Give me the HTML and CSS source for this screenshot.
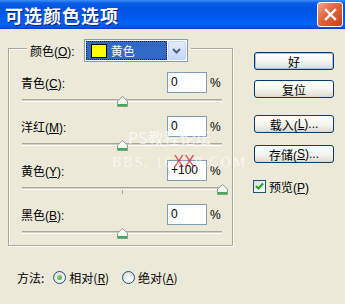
FILE: index.html
```html
<!DOCTYPE html>
<html lang="zh-CN">
<head>
    <meta charset="UTF-8">
    <title>可选颜色选项</title>
    <link rel="stylesheet" href="styles.css">
</head>
<body>
<div class="dialog">
    <div class="titlebar">
        <span class="title">可选颜色选项</span>
        <span class="close-btn">
            <svg width="13" height="13" viewBox="0 0 13 13"><path d="M2 2 L11 11 M11 2 L2 11" stroke="#fff" stroke-width="2.4" stroke-linecap="square"/></svg>
        </span>
    </div>

    <div class="content">
        <div class="left-col">
            <div class="group">
                <div class="legend">
                    <span>颜色(<u>O</u>):</span>
                    <div class="combo">
                        <div class="combo-value"><span class="swatch"></span>黄色</div>
                        <div class="combo-arrow">
                            <svg width="9" height="6" viewBox="0 0 9 6"><path d="M1 1 L4.5 4.5 L8 1" fill="none" stroke="#4d6185" stroke-width="2"/></svg>
                        </div>
                    </div>
                </div>

                <div class="row">
                    <div class="row-head">
                        <span class="row-label">青色(<u>C</u>):</span>
                        <span class="num-box">0</span>
                        <span class="pct">%</span>
                    </div>
                    <div class="slider">
                        <span class="tick"></span>
                        <span class="thumb" style="left: 50%"><svg width="11" height="11" viewBox="0 0 11 11"><path d="M5.5 0.5 L10.5 5 V10.5 H0.5 V5 Z" fill="#f6f6f1" stroke="#8b9ca3"/><rect x="1" y="8" width="9" height="2" fill="#3fae48"/></svg></span>
                    </div>
                </div>

                <div class="row">
                    <div class="row-head">
                        <span class="row-label">洋红(<u>M</u>):</span>
                        <span class="num-box">0</span>
                        <span class="pct">%</span>
                    </div>
                    <div class="slider">
                        <span class="tick"></span>
                        <span class="thumb" style="left: 50%"><svg width="11" height="11" viewBox="0 0 11 11"><path d="M5.5 0.5 L10.5 5 V10.5 H0.5 V5 Z" fill="#f6f6f1" stroke="#8b9ca3"/><rect x="1" y="8" width="9" height="2" fill="#3fae48"/></svg></span>
                    </div>
                </div>

                <div class="row">
                    <div class="row-head">
                        <span class="row-label">黄色(<u>Y</u>):</span>
                        <span class="num-box">+100</span>
                        <span class="pct">%</span>
                    </div>
                    <div class="slider">
                        <span class="tick"></span>
                        <span class="thumb" style="left: 100%"><svg width="11" height="11" viewBox="0 0 11 11"><path d="M5.5 0.5 L10.5 5 V10.5 H0.5 V5 Z" fill="#f6f6f1" stroke="#8b9ca3"/><rect x="1" y="8" width="9" height="2" fill="#3fae48"/></svg></span>
                    </div>
                </div>

                <div class="row">
                    <div class="row-head">
                        <span class="row-label">黑色(<u>B</u>):</span>
                        <span class="num-box">0</span>
                        <span class="pct">%</span>
                    </div>
                    <div class="slider">
                        <span class="tick"></span>
                        <span class="thumb" style="left: 50%"><svg width="11" height="11" viewBox="0 0 11 11"><path d="M5.5 0.5 L10.5 5 V10.5 H0.5 V5 Z" fill="#f6f6f1" stroke="#8b9ca3"/><rect x="1" y="8" width="9" height="2" fill="#3fae48"/></svg></span>
                    </div>
                </div>
            </div>

            <div class="method">
                <span class="method-label">方法:</span>
                <span class="radio checked"></span>
                <span class="radio-text">相对(<u>R</u>)</span>
                <span class="radio"></span>
                <span class="radio-text">绝对(<u>A</u>)</span>
            </div>
        </div>

        <div class="right-col">
            <div class="btn btn-default">好</div>
            <div class="btn btn-reset">复位</div>
            <div class="btn btn-load">载入(<u>L</u>)...</div>
            <div class="btn btn-save">存储(<u>S</u>)...</div>
            <div class="preview">
                <span class="check">
                    <svg width="9" height="9" viewBox="0 0 9 9"><path d="M1 4 L3.5 6.5 L8 1.5" fill="none" stroke="#21a121" stroke-width="2"/></svg>
                </span>
                <span>预览(<u>P</u>)</span>
            </div>
        </div>
    </div>

    <div class="watermark">
        <div class="wm-top">PS教程论坛</div>
        <div class="wm-bottom">BBS. 16<span class="wm-red">XX</span>8.COM</div>
    </div>
</div>
</body>
</html>
```

FILE: styles.css
```css
body {
    margin: 0;
    background: #ece9d8;
    font-family: "Liberation Sans", "Noto Sans CJK SC", sans-serif;
    font-size: 12px;
    color: #000;
}
.dialog {
    position: relative;
    width: 345px;
    height: 304px;
    overflow: hidden;
}
.titlebar {
    box-sizing: border-box;
    height: 29px;
    display: flex;
    align-items: center;
    justify-content: space-between;
    padding: 0 2px 0 5px;
    background: linear-gradient(to bottom, #3d8ff6 0, #0a5fe6 3px, #0054e3 8px, #0058eb 50%, #0062f5 80%, #0058e8 92%, #0040c4 100%);
}
.title {
    color: #fff;
    font-family: "Noto Sans CJK SC", sans-serif;
    font-weight: bold;
    font-size: 18px;
    letter-spacing: 1px;
    text-shadow: 1px 1px 0 #0a1e7a;
}
.close-btn {
    box-sizing: border-box;
    width: 26px;
    height: 25px;
    border: 1px solid #fff;
    border-radius: 3px;
    background: linear-gradient(135deg, #f2a88a 0, #e26a40 40%, #c8401a 100%);
    display: flex;
    align-items: center;
    justify-content: center;
}

.content {
    display: flex;
    padding: 19px 0 0 8px;
}
.left-col {
    width: 225px;
}
.group {
    box-sizing: border-box;
    width: 225px;
    border: 1px solid #aca899;
    box-shadow: inset 1px 1px 0 #fff, 1px 1px 0 #fff;
    padding: 0 10px 6px 12px;
}
.legend {
    display: flex;
    align-items: center;
    gap: 9px;
    width: max-content;
    margin: -10px 0 10px 6px;
    padding: 0 3px;
    background: #ece9d8;
}
.combo {
    box-sizing: border-box;
    display: flex;
    gap: 1px;
    width: 104px;
    height: 23px;
    padding: 1px;
    border: 1px solid #7f9db9;
    background: #fff;
}
.combo-value {
    flex: 1;
    display: flex;
    align-items: center;
    gap: 4px;
    padding-left: 4px;
    border: 1px dotted #222;
    background: #316ac5;
    color: #fff;
    font-family: "Noto Sans CJK SC", sans-serif;
}
.swatch {
    box-sizing: border-box;
    width: 16px;
    height: 14px;
    border: 1px solid #000;
    background: #ffff00;
}
.combo-arrow {
    box-sizing: border-box;
    width: 18px;
    display: flex;
    align-items: center;
    justify-content: center;
    border: 1px solid #c3d3fd;
    border-radius: 2px;
    background: linear-gradient(to bottom, #e6eefe, #c4d6fc);
}

.row + .row {
    margin-top: 9px;
}
.row-head {
    display: flex;
    align-items: center;
    height: 21px;
}
.row-label {
    flex: 1;
}
.num-box {
    box-sizing: border-box;
    width: 40px;
    height: 21px;
    border: 1px solid #7f9db9;
    background: #fff;
    padding-left: 3px;
    line-height: 19px;
}
.pct {
    width: 12px;
    margin-left: 3px;
}
.slider {
    position: relative;
    width: 200px;
    height: 14px;
    margin-left: 1px;
}
.slider::before {
    content: "";
    position: absolute;
    left: 0;
    right: 0;
    top: 6px;
    height: 1px;
    background: #d3d0c4;
    border-top: 1px solid #aca899;
    border-bottom: 1px solid #fff;
}
.tick {
    position: absolute;
    left: 50%;
    top: 9px;
    width: 1px;
    height: 4px;
    background: #aca899;
}
.thumb {
    position: absolute;
    top: 3px;
    width: 11px;
    height: 11px;
    margin-left: -5px;
    line-height: 0;
}

.method {
    display: flex;
    align-items: center;
    height: 14px;
    margin-top: 24px;
    padding-left: 9px;
    font-family: "Noto Sans CJK SC", sans-serif;
}
.method-label {
    margin-right: 9px;
}
.radio {
    box-sizing: border-box;
    width: 13px;
    height: 13px;
    border: 1px solid #1c5180;
    border-radius: 50%;
    background: radial-gradient(circle at 65% 65%, #fff 0, #e8e8e2 60%, #d0cfc6 100%);
    display: flex;
    align-items: center;
    justify-content: center;
}
.radio.checked::after {
    content: "";
    width: 5px;
    height: 5px;
    border-radius: 50%;
    background: radial-gradient(circle at 35% 35%, #8be08b, #21a121);
}
.radio-text {
    margin-left: 3px;
    margin-right: 13px;
}

.right-col {
    margin-left: 21px;
    padding-top: 4px;
}
.btn {
    box-sizing: border-box;
    display: flex;
    align-items: center;
    justify-content: center;
    width: 80px;
    height: 18px;
    border: 1px solid #003c74;
    border-radius: 3px;
    background: linear-gradient(to bottom, #fff 0, #f4f4ef 55%, #e3e0d6 90%, #d6d0c5 100%);
}
.btn-default {
    box-shadow: inset 0 0 0 1px #a9c2ee;
}
.btn-reset { margin-top: 10px; }
.btn-load { margin-top: 17px; }
.btn-save { margin-top: 12px; }
.preview {
    display: flex;
    align-items: center;
    gap: 3px;
    margin: 15px 0 0 -1px;
}
.check {
    box-sizing: border-box;
    width: 13px;
    height: 13px;
    border: 1px solid #1c5180;
    background: linear-gradient(135deg, #dcdcd7, #fff);
    display: flex;
    align-items: center;
    justify-content: center;
}

.watermark {
    position: absolute;
    left: 112px;
    top: 128px;
    color: rgba(255, 255, 255, 0.7);
    pointer-events: none;
}
.wm-top {
    margin-left: 16px;
    font-family: "Noto Sans CJK SC", sans-serif;
    font-size: 16px;
    line-height: 18px;
}
.wm-bottom {
    margin-top: 8px;
    font-family: "Liberation Serif", serif;
    font-size: 14px;
    letter-spacing: 2px;
    line-height: 16px;
}
.wm-red {
    color: rgba(220, 20, 30, 0.75);
    font-family: "Liberation Sans", sans-serif;
    font-size: 16px;
    letter-spacing: 0;
}
```
